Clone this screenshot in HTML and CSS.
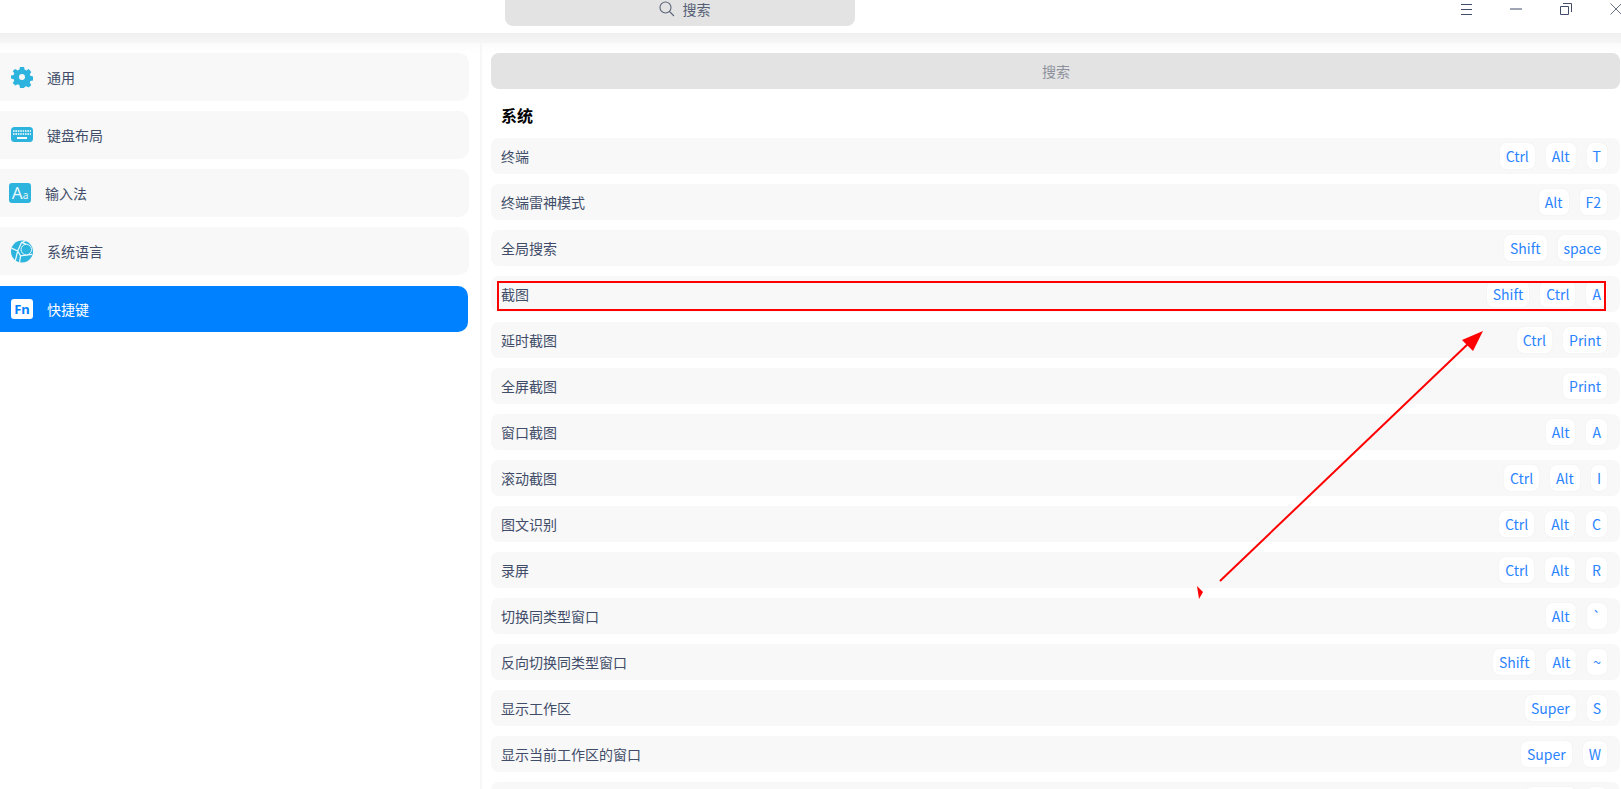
FILE: index.html
```html
<!DOCTYPE html>
<html lang="zh-CN">
<head>
    <meta charset="UTF-8">
    <meta name="viewport" content="width=device-width, initial-scale=1.0">
    <title>快捷键</title>
    <link rel="stylesheet" href="styles.css">
</head>
<body>
    <header class="titlebar">
        <div class="top-search">
            <svg class="top-search-icon" width="16" height="16" viewBox="0 0 16 16"><circle cx="6.5" cy="6.5" r="5.5" fill="none" stroke="#5a6478" stroke-width="1.1"/><path d="M10.5 10.5 L15 15" stroke="#5a6478" stroke-width="1.1" fill="none"/></svg>
            <span>搜索</span>
        </div>
        <div class="win-buttons">
            <div class="win-btn"><svg width="11" height="11" viewBox="0 0 11 11"><path d="M0 .5H11M0 5.5H11M0 10.5H11" stroke="#414d68" fill="none"/></svg></div>
            <div class="win-btn"><svg width="12" height="2" viewBox="0 0 12 2"><path d="M0 1H12" stroke="#414d68" fill="none"/></svg></div>
            <div class="win-btn"><svg width="12" height="12" viewBox="0 0 12 12"><path d="M.5 3.5H8.5V11.5H.5ZM3 .5H11.5V9" stroke="#414d68" fill="none"/></svg></div>
            <div class="win-btn"><svg width="12" height="12" viewBox="0 0 12 12"><path d="M.5 .5L11.5 11.5M11.5 .5L.5 11.5" stroke="#414d68" stroke-width=".8" fill="none"/></svg></div>
        </div>
    </header>
    <div class="band"></div>

    <div class="layout">
        <aside class="sidebar">
            <div class="nav-item">
                <svg class="nav-icon" width="22" height="22" viewBox="0 0 22 22"><path fill="#2cb3de" fill-rule="evenodd" d="M9 1h4l.6 2.6 1.7.8L17.7 3l2.6 3-1.500 2.200.5 1.600 2.700.7v3.900l-2.700.7-.5 1.600 1.500 2.200-2.600 2.600-2.400-1.300-1.700.8L13 22H9l-.6-2.900-1.700-.8L4.300 19.600 1.700 17l1.500-2.200-.5-1.600L0 12.500V9.600l2.700-.7.500-1.600L1.700 5.100 4.300 3l2.400 1.400 1.700-.8zM11 8a3 3 0 1 0 0 6 3 3 0 0 0 0-6z"/></svg>
                <span>通用</span>
            </div>
            <div class="nav-item">
                <svg class="nav-icon" width="22" height="16" viewBox="0 0 22 16"><rect width="22" height="15" rx="3.500" fill="#2cb3de"/><path d="M2 4h18M2 7h18" stroke="#fff" stroke-width="1.600" stroke-dasharray="1.600 .8" fill="none"/><rect x="6" y="10" width="10" height="2" fill="#fff"/></svg>
                <span>键盘布局</span>
            </div>
            <div class="nav-item nav-item-tight">
                <div class="aa-icon">A<small>a</small></div>
                <span>输入法</span>
            </div>
            <div class="nav-item">
                <svg class="nav-icon" width="22" height="23" viewBox="0 0 23 23"><circle cx="11.500" cy="11.500" r="11.500" fill="#2cb3de"/><path d="M.5 8 7 11 11 2 15 .5M7 11 4.500 21M7 11 10 16 22 14.500M11 2 16 4M10 16 9 22.500" stroke="#eef9fd" stroke-width="1.300" fill="none"/><circle cx="16" cy="9.500" r="5.500" fill="#2cb3de" stroke="#eef9fd"/></svg>
                <span>系统语言</span>
            </div>
            <div class="nav-item nav-item-active">
                <div class="fn-icon">Fn</div>
                <span>快捷键</span>
            </div>
        </aside>

        <main class="content">
            <div class="main-search">搜索</div>
            <h2 class="section-title">系统</h2>
            <div class="rows">
                <div class="row"><span>终端</span><div class="keys"><kbd>Ctrl</kbd><kbd>Alt</kbd><kbd>T</kbd></div></div>
                <div class="row"><span>终端雷神模式</span><div class="keys"><kbd>Alt</kbd><kbd>F2</kbd></div></div>
                <div class="row"><span>全局搜索</span><div class="keys"><kbd>Shift</kbd><kbd>space</kbd></div></div>
                <div class="row"><span>截图</span><div class="keys"><kbd>Shift</kbd><kbd>Ctrl</kbd><kbd>A</kbd></div></div>
                <div class="row"><span>延时截图</span><div class="keys"><kbd>Ctrl</kbd><kbd>Print</kbd></div></div>
                <div class="row"><span>全屏截图</span><div class="keys"><kbd>Print</kbd></div></div>
                <div class="row"><span>窗口截图</span><div class="keys"><kbd>Alt</kbd><kbd>A</kbd></div></div>
                <div class="row"><span>滚动截图</span><div class="keys"><kbd>Ctrl</kbd><kbd>Alt</kbd><kbd>I</kbd></div></div>
                <div class="row"><span>图文识别</span><div class="keys"><kbd>Ctrl</kbd><kbd>Alt</kbd><kbd>C</kbd></div></div>
                <div class="row"><span>录屏</span><div class="keys"><kbd>Ctrl</kbd><kbd>Alt</kbd><kbd>R</kbd></div></div>
                <div class="row"><span>切换同类型窗口</span><div class="keys"><kbd>Alt</kbd><kbd>`</kbd></div></div>
                <div class="row"><span>反向切换同类型窗口</span><div class="keys"><kbd>Shift</kbd><kbd>Alt</kbd><kbd>~</kbd></div></div>
                <div class="row"><span>显示工作区</span><div class="keys"><kbd>Super</kbd><kbd>S</kbd></div></div>
                <div class="row"><span>显示当前工作区的窗口</span><div class="keys"><kbd>Super</kbd><kbd>W</kbd></div></div>
                <div class="row"><span></span><div class="keys keys-blank"><kbd class="key-super"></kbd><kbd class="key-last"></kbd></div></div>
            </div>
        </main>
    </div>

    <!-- red annotation drawn on top of the screenshot -->
    <svg class="markup" width="1621" height="789" viewBox="0 0 1621 789">
        <rect x="498" y="282" width="1107" height="28" fill="none" stroke="#f00" stroke-width="2"/>
        <path d="M1220 581 L1470 342" stroke="#f00" stroke-width="2" fill="none"/>
        <path d="M1483 331 L1462 340 L1473 351 Z" fill="#f00"/>
        <path d="M1197 586 L1203 592 L1199 599 Z" fill="#f00"/>
    </svg>
</body>
</html>
```

FILE: styles.css
```css
* {
    box-sizing: border-box;
}
html, body {
    height: 100%;
}
body {
    margin: 0;
    overflow: hidden;
    background-color: #fff;
    color: #414d68;
    font-family: "Noto Sans CJK SC", "Noto Sans", sans-serif;
    font-size: 14px;
}

/* title bar */
.titlebar {
    display: flex;
    height: 33px;
    overflow: hidden;
}
.top-search {
    display: flex;
    align-items: center;
    justify-content: center;
    gap: 8px;
    width: 350px;
    height: 36px;
    margin-top: -10px;
    margin-left: 505px;
    padding-top: 2px;
    padding-left: 9px;
    background-color: #e3e3e3;
    border-radius: 8px;
    color: #555f75;
}
.win-buttons {
    display: flex;
    margin-left: auto;
    margin-right: -20px;
}
.win-btn {
    display: flex;
    align-items: center;
    justify-content: center;
    width: 50px;
    height: 18px;
}
.band {
    height: 10px;
    background: linear-gradient(#f0f0f0, #f6f6f6);
}

/* page body */
.layout {
    display: flex;
    height: 746px;
    background: linear-gradient(#fbfbfb, #fff 10px);
}
.sidebar {
    display: flex;
    flex-direction: column;
    gap: 10px;
    width: 482px;
    flex-shrink: 0;
    padding: 10px 11px 0 0;
    border-right: 2px solid #f7f7f7;
}
.nav-item {
    display: flex;
    align-items: center;
    height: 48px;
    margin-left: -10px;
    padding-left: 21px;
    background-color: #f8f8f8;
    border-radius: 10px;
}
.nav-item span {
    margin-left: 14px;
}
.nav-item-tight {
    padding-left: 19px;
}
.nav-icon {
    flex-shrink: 0;
}
.nav-item-active {
    height: 46px;
    margin-top: 1px;
    margin-right: 1px;
    background-color: #0081ff;
    color: #fff;
}
.aa-icon {
    width: 22px;
    height: 20px;
    background-color: #2cb3de;
    border-radius: 3px;
    color: #e8f7fc;
    font-family: "Noto Sans", sans-serif;
    font-size: 17px;
    line-height: 20px;
    text-align: center;
}
.aa-icon small {
    font-size: 10px;
}
.fn-icon {
    width: 22px;
    height: 20px;
    background-color: #fff;
    border-radius: 3px;
    color: #0081ff;
    font-family: "Noto Sans", sans-serif;
    font-size: 13px;
    font-weight: 700;
    line-height: 20px;
    text-align: center;
}

/* shortcut list */
.content {
    flex: 1;
    padding: 10px 1px 0 9px;
}
.main-search {
    height: 36px;
    padding-left: 1px;
    background-color: #e3e3e3;
    border-radius: 8px;
    color: #8c919c;
    line-height: 36px;
    text-align: center;
}
.section-title {
    height: 49px;
    margin: 0;
    padding-left: 10px;
    color: #000;
    font-size: 16px;
    font-weight: 700;
    line-height: 52px;
}
.rows {
    display: flex;
    flex-direction: column;
    gap: 10px;
}
.row {
    display: flex;
    align-items: center;
    justify-content: space-between;
    height: 36px;
    flex-shrink: 0;
    padding: 0 12px 0 10px;
    background-color: #f8f8f8;
    border-radius: 8px;
}
.keys {
    display: flex;
    gap: 9px;
}
kbd {
    display: block;
    height: 28px;
    padding: 0 6px;
    background-color: #fff;
    border: 1px solid #f5f5f5;
    border-radius: 8px;
    color: #2b84ff;
    font-family: "Noto Sans CJK SC", sans-serif;
    font-size: 14px;
    line-height: 26px;
}
.key-super {
    width: 53px;
}
.key-last {
    width: 22px;
}

.markup {
    position: absolute;
    top: 0;
    left: 0;
    pointer-events: none;
}
```
